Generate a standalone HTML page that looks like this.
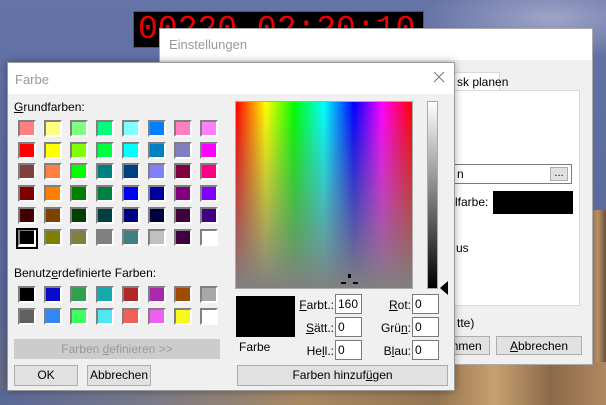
<!DOCTYPE html><html><head><meta charset="utf-8"><style>
*{margin:0;padding:0;box-sizing:border-box}
body{width:606px;height:405px;overflow:hidden;position:relative;font-family:"Liberation Sans",sans-serif;font-size:12px;color:#000;
background:linear-gradient(180deg,#6574a6 0%,#5d6c9e 40%,#5a6898 75%,#6a6c80 100%)}
.a{position:absolute}
.btn{position:absolute;background:#e1e1e1;border:1px solid #adadad;text-align:center;font-size:12px;line-height:18px}
.sw{position:absolute;width:18px;height:17px;border:2px solid;border-color:#808080 #fff #fff #808080}
.inp{position:absolute;background:#fff;border:1px solid #7a7a7a;height:20px;width:27px;padding-left:2px;line-height:18px;font-size:12px}
.lbl{position:absolute;text-align:right;font-size:12px}
</style></head><body>
<div class="a" style="left:420px;top:0;width:186px;height:60px;background:radial-gradient(ellipse at 70% 30%,#a0a4c8,transparent 70%)"></div>
<div class="a" style="left:590px;top:210px;width:16px;height:195px;background:linear-gradient(90deg,#8a6a48,#b89068,#6a5038)"></div>
<div class="a" style="left:0;top:388px;width:606px;height:17px;background:linear-gradient(90deg,#5a6898 0%,#7a7a88 25%,#a88860 50%,#7a5e40 100%)"></div>
<div class="a" style="left:440px;top:362px;width:166px;height:43px;background:linear-gradient(90deg,#9a7850,#c8a070,#8a6a48,#b08860)"></div>
<!-- clock -->
<div class="a" style="left:133px;top:11px;width:291px;height:37px;background:#000;border:1px solid #555;color:#e00;font-family:'Liberation Mono',monospace;font-size:33px;line-height:36px;overflow:hidden;white-space:nowrap;padding-left:4px">00220 02:20:10</div>
<!-- Einstellungen -->
<div class="a" style="left:159px;top:28px;width:434px;height:337px;background:#f0f0f0;border:1px solid #aaa">
 <div class="a" style="left:0;top:0;width:432px;height:31px;background:#fff;color:#999;font-size:13px;padding:8px 0 0 9px">Einstellungen</div>
 <div class="a" style="left:282px;top:43px;width:58px;height:19px;background:#fff;border:1px solid #d9d9d9;border-bottom:none;padding:2px 0 0 14px;white-space:nowrap">sk planen</div>
 <div class="a" style="left:240px;top:61px;width:180px;height:216px;background:#fff;border:1px solid #d9d9d9"></div>
 <div class="a" style="left:280px;top:135px;width:132px;height:20px;border:1px solid #7a7a7a;background:#fff;padding:2px 0 0 16px">n</div>
 <div class="a" style="left:390px;top:138px;width:18px;height:14px;background:#e1e1e1;border:1px solid #adadad;font-size:11px;line-height:10px;text-align:center">...</div>
 <div class="a" style="left:295px;top:166px">lfarbe:</div>
 <div class="a" style="left:333px;top:162px;width:80px;height:23px;background:#000"></div>
 <div class="a" style="left:296px;top:212px">us</div>
 <div class="a" style="left:297px;top:287px">tte)</div>
 <div class="btn" style="left:280px;top:307px;width:50px;height:19px">mmen</div>
 <div class="btn" style="left:336px;top:307px;width:86px;height:19px"><u>A</u>bbrechen</div>
</div>
<!-- Farbe dialog -->
<div class="a" style="left:7px;top:62px;width:448px;height:329px;background:#f0f0f0;border:1px solid #999;box-shadow:0 0 8px rgba(0,0,0,.35)">
 <div class="a" style="left:0;top:0;width:446px;height:31px;background:#fff;color:#999;font-size:13px;padding:9px 0 0 7px">Farbe</div>
 <svg class="a" style="left:425px;top:8px" width="12" height="12"><path d="M1 1L11 11M11 1L1 11" stroke="#777" stroke-width="1"/></svg>
 <div class="a" style="left:6px;top:37px"><u>G</u>rundfarben:</div>
 <div id="g"></div>
 <div class="a" style="left:6px;top:203px">Benutz<u>e</u>rdefinierte Farben:</div>
 <div class="btn" style="left:6px;top:276px;width:206px;height:20px;color:#999;border-color:#ccc;background:#ccc">Farben <u>d</u>efinieren &gt;&gt;</div>
 <div class="btn" style="left:6px;top:302px;width:64px;height:21px;line-height:19px">OK</div>
 <div class="btn" style="left:79px;top:302px;width:64px;height:21px;line-height:19px">Abbrechen</div>
 <div class="a" style="left:227px;top:38px;width:178px;height:188px;border:1px solid #aaa;background:linear-gradient(180deg,rgba(128,128,128,0),#808080),linear-gradient(90deg,#f00,#ff0 17%,#0f0 33%,#0ff 50%,#00f 67%,#f0f 83%,#f00)"></div>
 <div class="a" style="left:340px;top:211px;width:3px;height:4px;background:#000"></div>
 <div class="a" style="left:333px;top:219px;width:5px;height:2px;background:#000"></div>
 <div class="a" style="left:345px;top:219px;width:5px;height:2px;background:#000"></div>
 <div class="a" style="left:419px;top:38px;width:11px;height:188px;border:1px solid #aaa;background:linear-gradient(#fff,#000)"></div>
 <div class="a" style="left:432px;top:218px;width:0;height:0;border-top:7px solid transparent;border-bottom:7px solid transparent;border-right:8px solid #000"></div>
 <div class="a" style="left:228px;top:233px;width:59px;height:41px;background:#000"></div>
 <div class="a" style="left:231px;top:277px">Farbe</div>
 <div class="lbl" style="left:284px;top:235px;width:42px"><u>F</u>arbt.:</div>
 <div class="lbl" style="left:284px;top:258px;width:42px"><u>S</u>ätt.:</div>
 <div class="lbl" style="left:284px;top:281px;width:42px">He<u>l</u>l.:</div>
 <div class="inp" style="left:327px;top:231px">160</div>
 <div class="inp" style="left:327px;top:254px">0</div>
 <div class="inp" style="left:327px;top:277px">0</div>
 <div class="lbl" style="left:360px;top:235px;width:43px"><u>R</u>ot:</div>
 <div class="lbl" style="left:360px;top:258px;width:43px">Grü<u>n</u>:</div>
 <div class="lbl" style="left:360px;top:281px;width:43px">B<u>l</u>au:</div>
 <div class="inp" style="left:404px;top:231px">0</div>
 <div class="inp" style="left:404px;top:254px">0</div>
 <div class="inp" style="left:404px;top:277px">0</div>
 <div class="btn" style="left:229px;top:302px;width:211px;height:21px;line-height:19px">Farben hinzuf<u>ü</u>gen</div>
</div>
<script>
var b=["FF8080","FFFF80","80FF80","00FF80","80FFFF","0080FF","FF80C0","FF80FF","FF0000","FFFF00","80FF00","00FF40","00FFFF","0080C0","8080C0","FF00FF","804040","FF8040","00FF00","008080","004080","8080FF","800040","FF0080","800000","FF8000","008000","008040","0000FF","0000A0","800080","8000FF","400000","804000","004000","004040","000080","000040","400040","400080","000000","808000","808040","808080","408080","C0C0C0","400040","FFFFFF"];
var c=["000000","0A0ACA","30A050","18A8B0","B02828","A828B0","A04C00","A8A8A8","606060","3088F0","40FF60","50E8F0","F06058","F060F0","F8F820","FFFFFF"];
var h="";
b.forEach(function(x,i){var l=10+(i%8)*26,t=57+Math.floor(i/8)*21.7;h+='<div class="sw" style="left:'+l+'px;top:'+t+'px;background:#'+x+'"></div>';});
c.forEach(function(x,i){var l=10+(i%8)*26,t=223+Math.floor(i/8)*22;h+='<div class="sw" style="left:'+l+'px;top:'+t+'px;background:#'+x+'"></div>';});
h+='<div class="a" style="left:8px;top:165px;width:22px;height:21px;border:2px solid #000"></div>';
document.getElementById("g").outerHTML=h;
</script>
</body></html>
